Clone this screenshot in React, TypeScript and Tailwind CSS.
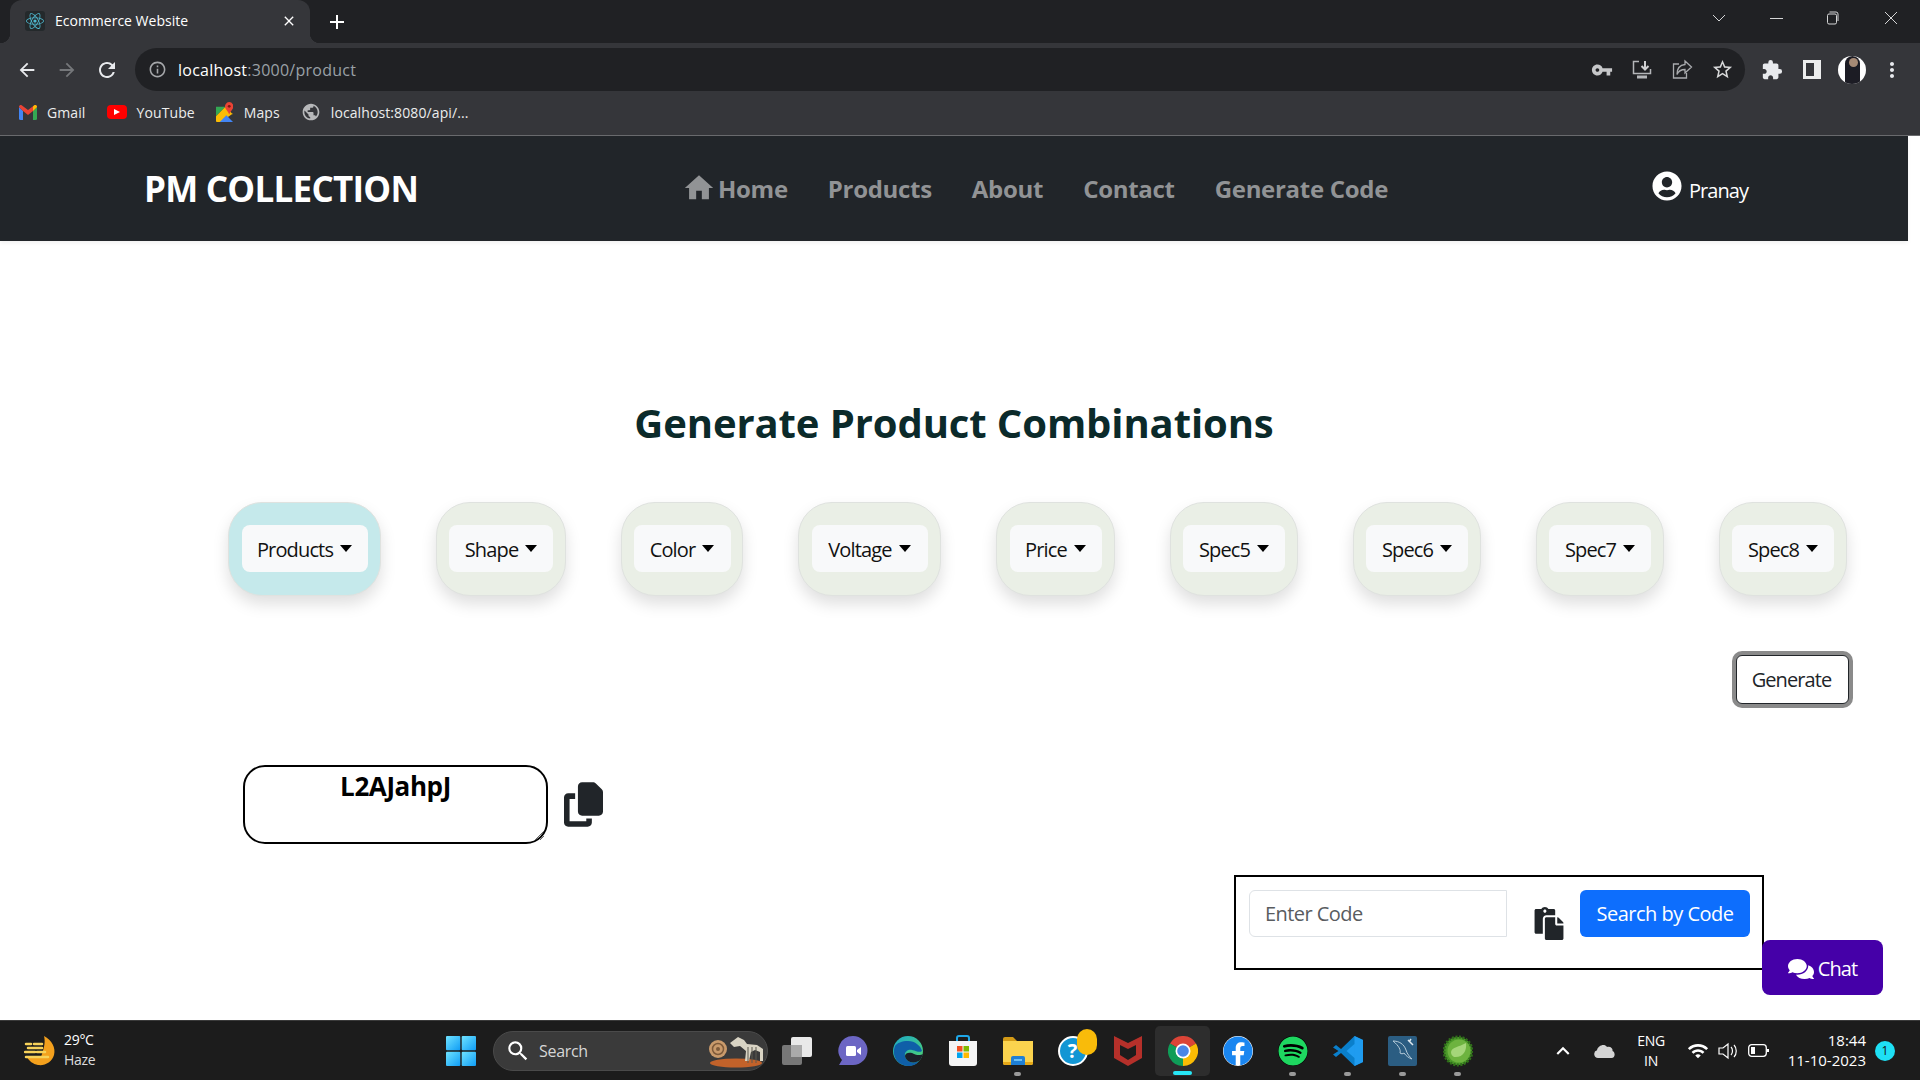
import React from "react";
import { FaReact, FaUserCircle, FaPaste, FaComments, FaFacebook, FaSpotify } from "react-icons/fa";
import { FaCopy } from "react-icons/fa6";
import { MdArrowBack, MdArrowForward, MdRefresh, MdInfoOutline, MdVpnKey, MdStarBorder, MdMoreVert, MdPublic, MdSearch, MdKeyboardArrowUp, MdClose, MdAdd, MdWifi, MdExtension, MdHome } from "react-icons/md";

const cards = [
  { label: "Products", card: "w-[153px] bg-[#c5e9eb]", btn: "w-[126px]" },
  { label: "Shape", card: "w-[130px] bg-[#eaefe6]", btn: "w-[104px]" },
  { label: "Color", card: "w-[122px] bg-[#eaefe6]", btn: "w-[97px]" },
  { label: "Voltage", card: "w-[143px] bg-[#eaefe6]", btn: "w-[116px]" },
  { label: "Price", card: "w-[119px] bg-[#eaefe6]", btn: "w-[92px]" },
  { label: "Spec5", card: "w-[128px] bg-[#eaefe6]", btn: "w-[102px]" },
  { label: "Spec6", card: "w-[128px] bg-[#eaefe6]", btn: "w-[102px]" },
  { label: "Spec7", card: "w-[128px] bg-[#eaefe6]", btn: "w-[102px]" },
  { label: "Spec8", card: "w-[128px] bg-[#eaefe6]", btn: "w-[102px]" },
];

const GmailIcon = () => (
  <svg width="18" height="15" viewBox="0 0 18 15">
    <path d="M0 2v11.500A1.500 1.500 0 0 0 1.500 15H4V6z" fill="#4285f4" />
    <path d="M18 2v11.500a1.500 1.500 0 0 1-1.500 1.500H14V6z" fill="#34a853" />
    <path d="M0 2l4 4 5 4 5-4 4-4c0-2-2-2.600-3-1.500L9 5 3 .5C2-.6 0 0 0 2z" fill="#ea4335" />
    <path d="M14 1.500V6l4-4c0-2-2-2.600-3-1.500z" fill="#fbbc04" />
  </svg>
);

const MapsIcon = () => (
  <svg width="17" height="21" viewBox="0 0 18 22">
    <path d="M0 5h10L0 15z" fill="#34a853" />
    <path d="M0 15L10 5l8 8v-1L5 21H1a1 1 0 0 1-1-1z" fill="#fbbc04" />
    <path d="M4 21l7-7 7 7z" fill="#4285f4" />
    <path d="M14 0a4.500 4.500 0 0 1 4 6.500c-.8 2-3 3.500-4 6.500-1-3-3.200-4.500-4-6.500A4.500 4.500 0 0 1 14 0z" fill="#ea4335" />
    <circle cx="14" cy="4.500" r="1.500" fill="#7c1a12" />
  </svg>
);

const InstallIcon = () => (
  <svg width="22" height="22" viewBox="0 0 22 22" fill="none" stroke="#b4b6b9" strokeWidth="1.500">
    <path d="M8 2.500H2.500v12h17V10" />
    <path d="M14 2v8M10.500 7l3.500 3.500L17.500 7" strokeWidth="2" stroke="#d0d1d3" />
    <path d="M6 18h10" strokeWidth="3" />
  </svg>
);

const ShareIcon = () => (
  <svg width="22" height="22" viewBox="0 0 22 22" fill="none" stroke="#a9abae" strokeWidth="1.300">
    <path d="M8 5H2.500v14h13v-5" />
    <path d="M14 2l6.500 6-6.500 6v-3.500c-4 0-6.500 1.500-8 5 0-6 3-9.500 8-10z" />
  </svg>
);

const WindowsLogo = () => (
  <svg width="30" height="30" viewBox="0 0 30 30">
    <defs>
      <linearGradient id="win" x1="0" y1="0" x2="1" y2="1">
        <stop offset="0" stopColor="#6fe3ff" />
        <stop offset="1" stopColor="#0f9cf5" />
      </linearGradient>
    </defs>
    <rect x="0" y="0" width="14.300" height="14.300" rx="1" fill="url(#win)" />
    <rect x="15.700" y="0" width="14.300" height="14.300" rx="1" fill="url(#win)" />
    <rect x="0" y="15.700" width="14.300" height="14.300" rx="1" fill="url(#win)" />
    <rect x="15.700" y="15.700" width="14.300" height="14.300" rx="1" fill="url(#win)" />
  </svg>
);

const WeatherIcon = () => (
  <svg width="32" height="30" viewBox="0 0 32 30">
    <path d="M20 0c8 4 12 12 10 19-2 7-9 11-16 10C9 28 5 25 3 21h14c2-6 5-14 3-21z" fill="#f3a01d" />
    <path d="M2 8h5M10 8h8M4 12h14M1 16h10M13 16h8M2 21h22" stroke="#f7d25a" strokeWidth="2.500" strokeLinecap="round" />
  </svg>
);

const SearchArt = () => (
  <svg width="56" height="34" viewBox="0 0 56 34">
    <ellipse cx="28" cy="29" rx="26" ry="4.500" fill="#c2622a" />
    <circle cx="10" cy="15" r="9" fill="#c99a6b" />
    <circle cx="10" cy="15" r="5.500" fill="none" stroke="#7e5a3a" strokeWidth="1.500" />
    <circle cx="10" cy="15" r="2" fill="#7e5a3a" />
    <path d="M22 9l8-6 6 3 3 4 10 1 6 4v12h-3v-9l-5-2-4 2-2 9h-4l1-10-6-5-6 1z" fill="#d9d4c4" />
    <path d="M40 13v16M44 13v16M48 13v16" stroke="#5c5a50" strokeWidth="1" />
  </svg>
);

const TaskView = () => (
  <svg width="32" height="30" viewBox="0 0 32 30">
    <rect x="0" y="9" width="20" height="20" rx="2" fill="#777" />
    <rect x="9" y="1" width="21" height="20" rx="2" fill="#e9e9e9" />
    <rect x="9" y="9" width="11" height="12" fill="#aaa" />
  </svg>
);

const MeetIcon = () => (
  <svg width="30" height="30" viewBox="0 0 30 30">
    <path d="M15 0a14.500 14.500 0 0 1 0 29H1l3-5A14.500 14.500 0 0 1 15 0z" fill="#6c66c4" />
    <rect x="8" y="10" width="10" height="10" rx="1.500" fill="#fff" />
    <path d="M19 14l4-3v8l-4-3z" fill="#fff" />
  </svg>
);

const EdgeIcon = () => (
  <svg width="30" height="30" viewBox="0 0 30 30">
    <defs>
      <linearGradient id="edge" x1="0" y1="0" x2="1" y2="1">
        <stop offset="0" stopColor="#1ba8c9" />
        <stop offset="1" stopColor="#52d66c" />
      </linearGradient>
    </defs>
    <circle cx="15" cy="15" r="15" fill="url(#edge)" />
    <path d="M2 10c-4 10 3 20 13 20 5 0 9-2 11-5-6 3-13 1-14-5-1-4 3-7 7-6 5 1 7 3 10 1C28 10 22 5 15 5 9 5 4 7 2 10z" fill="#0f5fa8" />
    <path d="M12 20c1 6 8 8 14 5 2-2 3-4 4-7-3 2-8 1-11-1-3-1-7 0-7 3z" fill="#1a1f2a" />
  </svg>
);

const StoreIcon = () => (
  <svg width="30" height="32" viewBox="0 0 30 32">
    <path d="M9 7V3a2 2 0 0 1 2-2h8a2 2 0 0 1 2 2v4" fill="none" stroke="#1ea7e8" strokeWidth="2" />
    <path d="M1 6h28v22a3 3 0 0 1-3 3H4a3 3 0 0 1-3-3z" fill="#f4f4f4" />
    <rect x="9" y="11" width="5.500" height="5.500" fill="#f25022" />
    <rect x="15.500" y="11" width="5.500" height="5.500" fill="#7fba00" />
    <rect x="9" y="17.500" width="5.500" height="5.500" fill="#00a4ef" />
    <rect x="15.500" y="17.500" width="5.500" height="5.500" fill="#ffb900" />
  </svg>
);

const FolderIcon = () => (
  <svg width="30" height="28" viewBox="0 0 30 28">
    <path d="M0 2a2 2 0 0 1 2-2h8l4 4h-14z" fill="#d39a16" />
    <path d="M0 4h30v22a2 2 0 0 1-2 2H2a2 2 0 0 1-2-2z" fill="#fbd34e" />
    <path d="M0 25h30v1a2 2 0 0 1-2 2H2a2 2 0 0 1-2-2z" fill="#e6a817" />
    <path d="M8 21a2 2 0 0 1 2-2h10a2 2 0 0 1 2 2v7H8z" fill="#1f7fd4" />
    <rect x="11" y="22" width="8" height="2" fill="#6cc0f5" />
  </svg>
);

const McAfeeIcon = () => (
  <svg width="28" height="30" viewBox="0 0 28 30">
    <path d="M0 0l14 7 14-7v22l-14 8-14-8zM6 9v10l8 5 8-5V9l-8 4z" fill="#b5302a" fillRule="evenodd" />
  </svg>
);

const ChromeIcon = () => (
  <svg width="30" height="30" viewBox="0 0 30 30">
    <path d="M15 15L2 7.500A15 15 0 0 1 28 7.500z" fill="#db4437" />
    <path d="M15 15L28 7.500A15 15 0 0 1 15 30z" fill="#fbbc04" />
    <path d="M15 15L15 30A15 15 0 0 1 2 7.500z" fill="#0f9d58" />
    <circle cx="15" cy="15" r="7.500" fill="#fff" />
    <circle cx="15" cy="15" r="5.800" fill="#4a86e8" />
  </svg>
);

const VsCodeIcon = () => (
  <svg width="30" height="30" viewBox="0 0 30 30">
    <path d="M21.500 0L30 4v22l-8.500 4L8 17l-5 4-3-2.500L5.500 15 0 11.500 3 9l5 4z" fill="#0a7fcb" />
    <path d="M21.500 0L30 4v22l-8.500 4zM21.500 8l-8 7 8 7z" fill="#1f9cf0" fillRule="evenodd" />
  </svg>
);

const MysqlIcon = () => (
  <svg width="29" height="30" viewBox="0 0 29 30">
    <rect width="29" height="30" rx="2" fill="#2b5d82" />
    <path d="M5 5c6 0 11 3 13 9 1 4 4 7 6 9-3-1-6-3-8-6-1 1-3 1-4 0 1-3-1-7-7-12z" fill="none" stroke="#b5cbd9" strokeWidth="1" />
    <path d="M20 4l5 5M23 3l-2 3" stroke="#dfe8ee" strokeWidth="1.500" />
  </svg>
);

const SpringIcon = () => (
  <svg width="30" height="32" viewBox="0 0 30 32">
    <circle cx="15" cy="16" r="14" fill="#4c9a2a" stroke="#2f6e1a" strokeWidth="3" strokeDasharray="2 1.500" />
    <circle cx="16" cy="16" r="11.500" fill="#6db33f" />
    <path d="M23 8c1 8-3 15-12 14-2-1-3-3-3-5 1-5 8-5 15-9z" fill="#a5d67a" />
  </svg>
);

const HelpIcon = () => (
  <div className="relative w-[30px] h-[30px] rounded-full border-2 border-white bg-[#1296d4] flex items-center justify-center text-white text-[20px] font-bold">
    ?
    <span className="absolute top-[-9px] right-[-11px] w-[20px] h-[26px] rounded-full bg-[#f9bb0a]" />
  </div>
);

const taskbarApps = [
  { id: "task", icon: <TaskView /> },
  { id: "meet", icon: <MeetIcon /> },
  { id: "edge", icon: <EdgeIcon /> },
  { id: "store", icon: <StoreIcon /> },
  { id: "folder", icon: <FolderIcon />, dot: true },
  { id: "help", icon: <HelpIcon /> },
  { id: "mcafee", icon: <McAfeeIcon /> },
  { id: "chrome", icon: <ChromeIcon />, active: true },
  { id: "fb", icon: <FaFacebook className="w-[30px] h-[30px] text-[#1a86f0] bg-white rounded-full" /> },
  { id: "spotify", icon: <FaSpotify className="w-[30px] h-[30px] text-[#1ed760] bg-black rounded-full" />, dot: true },
  { id: "vscode", icon: <VsCodeIcon />, dot: true },
  { id: "mysql", icon: <MysqlIcon />, dot: true },
  { id: "spring", icon: <SpringIcon />, dot: true },
];

const ToolbarCell = ({ children }: { children: React.ReactNode }) => (
  <div className="w-10 h-10 flex items-center justify-center shrink-0">{children}</div>
);

const BrowserChrome = () => (
  <div className="h-[136px] bg-[#35363a] border-b border-[#6a6b6e] shrink-0">
    {/* Tab strip */}
    <div className="h-[43px] bg-[#202124] flex pl-[10px]">
      <div className="relative w-[300px] h-[43px] bg-[#35363a] rounded-t-[12px] flex items-center pl-[15px] pr-[13px] pb-[2px] text-white text-[14px]">
        <span className="absolute left-[-10px] bottom-0 w-[10px] h-[10px] bg-[radial-gradient(circle_at_0_0,#202124_10px,#35363a_10.5px)]" />
        <span className="absolute right-[-10px] bottom-0 w-[10px] h-[10px] bg-[radial-gradient(circle_at_100%_0,#202124_10px,#35363a_10.5px)]" />
        <span className="w-5 h-5 bg-[#24292b] rounded-[3px] flex items-center justify-center mr-[10px]">
          <FaReact className="w-[18px] h-[18px] text-[#4fb8cf]" />
        </span>
        <span>Ecommerce Website</span>
        <MdClose className="ml-auto w-[16px] h-[16px] text-white" />
      </div>
      <div className="ml-[15px] w-6 h-[43px] flex items-center justify-center">
        <MdAdd className="w-[24px] h-[24px] text-white" />
      </div>
      <div className="ml-auto flex items-center text-[#d5d6d7] h-[36px]">
        <svg width="14" height="8" viewBox="0 0 14 8" fill="none" stroke="currentColor"><path d="M1 1l6 6 6-6" /></svg>
        <div className="ml-[44px] w-[13px] border-t border-current" />
        <svg className="ml-[43px]" width="13" height="14" viewBox="0 0 13 14" fill="none" stroke="currentColor"><rect x="1.500" y="3" width="9" height="10" rx="1.500" /><path d="M3.500 1H10a2 2 0 0 1 2 2v7" /></svg>
        <svg className="ml-[45px] mr-[22px]" width="14" height="14" viewBox="0 0 14 14" fill="none" stroke="currentColor"><path d="M1 1l12 12M13 1L1 13" /></svg>
      </div>
    </div>
    {/* Toolbar */}
    <div className="h-[48px] flex items-center pl-[7px] pt-[5px]">
      <ToolbarCell><MdArrowBack className="w-[22px] h-[22px] text-[#e8eaed]" /></ToolbarCell>
      <ToolbarCell><MdArrowForward className="w-[22px] h-[22px] text-[#75777a]" /></ToolbarCell>
      <ToolbarCell><MdRefresh className="w-[24px] h-[24px] text-[#e8eaed]" /></ToolbarCell>
      <div className="ml-[8px] w-[1610px] h-[43px] bg-[#202124] rounded-full flex items-center pl-[13px] pr-[3px]">
        <MdInfoOutline className="w-[19px] h-[19px] text-[#a5a7aa]" />
        <span className="ml-[11px] text-[16px] tracking-[0.25px] text-white">localhost<span className="text-[#9aa0a6]">:3000/product</span></span>
        <div className="ml-auto flex">
          <ToolbarCell><MdVpnKey className="w-[22px] h-[22px] text-[#c6c7c9]" /></ToolbarCell>
          <ToolbarCell><InstallIcon /></ToolbarCell>
          <ToolbarCell><ShareIcon /></ToolbarCell>
          <ToolbarCell><MdStarBorder className="w-[23px] h-[23px] text-[#d8d9da]" /></ToolbarCell>
        </div>
      </div>
      <div className="ml-[7px] flex">
        <ToolbarCell><MdExtension className="w-[22px] h-[22px] text-[#e8eaed]" /></ToolbarCell>
        <ToolbarCell><span className="w-[18px] h-[19px] border-[3px] border-r-[7px] border-[#eceded] bg-[#35363a]" /></ToolbarCell>
        <ToolbarCell>
          <span className="relative w-[28px] h-[28px] rounded-full bg-white flex justify-center overflow-hidden">
            <span className="w-[15px] h-[28px] bg-[#1c1c24] rounded-t-[8px]" />
            <span className="absolute top-[2px] left-[11px] w-[9px] h-[9px] rounded-full bg-[#a68a75]" />
          </span>
        </ToolbarCell>
        <ToolbarCell><MdMoreVert className="w-[24px] h-[24px] text-[#e8eaed]" /></ToolbarCell>
      </div>
    </div>
    {/* Bookmarks */}
    <div className="h-[44px] flex items-center pl-[19px] pb-[2px] text-[14px] tracking-[0.1px] text-[#eceded]">
      <GmailIcon />
      <span className="ml-[10px]">Gmail</span>
      <span className="ml-[21px] w-5 h-[14px] rounded-[4px] bg-[#f00] flex items-center justify-center">
        <span className="border-l-[6px] border-y-[3.500px] border-y-transparent border-l-white" />
      </span>
      <span className="ml-[10px]">YouTube</span>
      <span className="ml-[21px] flex"><MapsIcon /></span>
      <span className="ml-[11px]">Maps</span>
      <MdPublic className="ml-[21px] w-[20px] h-[20px] text-[#b7b8ba]" />
      <span className="ml-[10px]">localhost:8080/api/...</span>
    </div>
  </div>
);

const Navbar = () => (
  <nav className="w-[1908px] h-[105px] bg-[#212529] flex items-center pl-[144px] pr-[160px] shadow-[0_2px_4px_rgba(0,0,0,0.06)] shrink-0">
    <a className="w-[540px] pt-[2px] text-[35px] font-bold text-white tracking-[-0.75px]">PM COLLECTION</a>
    <div className="flex items-center gap-[40px] pt-[1px] text-[24px] font-bold text-[#919395] tracking-[-0.3px]">
      <a className="flex items-center gap-[4px]"><MdHome className="w-[34px] h-[34px] mb-[3px] -mx-[2px]" />Home</a>
      <a>Products</a>
      <a>About</a>
      <a>Contact</a>
      <a>Generate Code</a>
    </div>
    <div className="ml-auto flex items-center gap-[7px] text-[20px] text-white tracking-[-0.95px]">
      <FaUserCircle className="w-[30px] h-[30px] mb-[5px]" />
      <span className="mt-[5px]">Pranay</span>
    </div>
  </nav>
);

const Taskbar = () => (
  <div className="h-[60px] bg-[#1c1c1c] border-t border-[#3a3a3a] flex items-center text-white shrink-0">
    <div className="w-[446px] flex items-center pl-[24px] shrink-0">
      <WeatherIcon />
      <div className="ml-[8px] mb-[2px] text-[14px] leading-[20px] tracking-[-0.3px]">
        <div>29°C</div>
        <div className="text-[#dcdcdc]">Haze</div>
      </div>
    </div>
    <WindowsLogo />
    <div className="ml-[17px] w-[275px] h-[40px] rounded-full bg-[#3a3a3a] border border-[#4a4a4a] flex items-center pl-[11px] pr-[3px] text-[16px] text-[#d6d6d6] tracking-[-0.3px]">
      <MdSearch className="w-[26px] h-[26px] text-white" />
      <span className="ml-[8px]">Search</span>
      <span className="ml-auto flex"><SearchArt /></span>
    </div>
    <div className="flex ml-[2px]">
      {taskbarApps.map((app) => (
        <div
          key={app.id}
          className={app.active
            ? "relative w-[55px] h-[50px] flex items-center justify-center bg-[#2d2d2d] rounded-[5px]"
            : "relative w-[55px] h-[50px] flex items-center justify-center"}
        >
          {app.icon}
          {app.dot && <span className="absolute bottom-[0px] left-[24px] w-[7px] h-[4px] rounded-full bg-[#9a9a9a]" />}
          {app.active && <span className="absolute bottom-[1px] left-[18px] w-[19px] h-[4px] rounded-full bg-[#27e6f5]" />}
        </div>
      ))}
    </div>
    <div className="ml-auto flex items-center pr-[25px] text-[14px]">
      <div className="w-[36px] flex justify-center"><MdKeyboardArrowUp className="w-[26px] h-[26px]" /></div>
      <div className="w-[42px] pl-[4px] flex justify-center">
        <svg width="21" height="14" viewBox="0 0 21 14"><path d="M4 14a4 4 0 0 1-1-7.800C4 2 10-1 13 3c4-1 6 2 5.500 4 3 1 3 7-1 7z" fill="#d4d4d4" /></svg>
      </div>
      <div className="w-[56px] text-center leading-[20px] tracking-[-0.3px]">ENG<br />IN</div>
      <div className="w-[34px] pl-[4px] flex justify-center"><MdWifi className="w-[22px] h-[22px]" /></div>
      <div className="w-[30px] flex justify-center">
        <svg width="21" height="18" viewBox="0 0 21 18" fill="none" stroke="#fff" strokeWidth="1.200"><path d="M1 6h4l5-4v14l-5-4H1zM13 5c2 2 2 6 0 8M16 3c3 3 3 9 0 12" /></svg>
      </div>
      <div className="w-[30px] flex justify-center">
        <svg width="21" height="13" viewBox="0 0 21 13" fill="none"><rect x=".700" y=".700" width="17.600" height="11.600" rx="3" stroke="#fff" strokeWidth="1.300" /><rect x="3" y="3" width="4" height="7" fill="#fff" /><rect x="19" y="5" width="2" height="3" fill="#fff" /></svg>
      </div>
      <div className="w-[93px] text-right leading-[20px] text-[15px] mb-[1px]">18:44<br />11-10-2023</div>
      <div className="ml-[9px] w-5 h-5 rounded-full bg-[#1ee0f5] text-[#111] text-[12px] flex items-center justify-center">1</div>
    </div>
  </div>
);

const App: React.FC = () => {
  return (
    <div className="w-[1920px] h-[1080px] overflow-hidden flex flex-col bg-white [font-family:'Open_Sans',sans-serif]">
      <BrowserChrome />
      <Navbar />

      {/* Page body */}
      <main className="relative flex-1 pt-[158px] text-[#212529]">
        <h1 className="text-[40px] leading-[48px] font-bold text-center mr-[12px] text-[#0b2a2a] tracking-[-0.1px]">
          Generate Product Combinations
        </h1>

        <div className="mt-[55px] flex gap-[55px] pl-[228px]">
          {cards.map((c) => (
            <div
              key={c.label}
              className={`${c.card} h-[94px] rounded-[34px] border border-[#dfe2df] shadow-[0_8px_16px_rgba(0,0,0,0.13)] flex justify-center pt-[22px] shrink-0`}
            >
              <button className={`${c.btn} h-[47px] pt-[2px] rounded-[8px] bg-[#f8f9fa] flex items-center justify-center text-[20px] text-[#111] tracking-[-0.85px]`}>
                {c.label}
                <span className="ml-[7px] mb-[3px] border-t-[7px] border-x-[6px] border-x-transparent border-t-black" />
              </button>
            </div>
          ))}
        </div>

        <div className="mt-[59px] flex justify-end pr-[71px]">
          <button className="w-[113px] h-[49px] rounded-[6px] border border-[#212529] bg-white pr-[2px] text-[20px] tracking-[-0.9px] text-[#212529] shadow-[0_0_0_4px_#8a8a8a]">
            Generate
          </button>
        </div>

        <div className="mt-[61px] flex pl-[243px]">
          <div className="relative w-[305px] h-[79px]">
            <textarea
              readOnly
              value="L2AJahpJ"
              className="block resize-none w-full h-full rounded-[22px] border-2 border-black text-center text-[26px] leading-[38px] font-bold text-black tracking-[-0.4px] px-[2px] py-0 outline-none"
            />
            <svg className="absolute right-[3px] bottom-[3px]" width="11" height="11" viewBox="0 0 11 11" stroke="#666" strokeWidth="1">
              <path d="M1 10L10 1M6 10l4-4" />
            </svg>
          </div>
          <FaCopy className="ml-[16px] mt-[17px] w-[39px] h-[45px] text-[#212529]" />
        </div>

        <div className="mt-[31px] flex justify-end pr-[156px]">
          <div className="w-[530px] h-[95px] border-2 border-black flex pl-[13px] pt-[13px]">
            <div className="w-[258px] h-[47px] rounded-l-[6px] border border-[#dee2e6] bg-white flex items-center pl-[15px] text-[20px] text-[#595c5f] tracking-[-0.55px]">
              Enter Code
            </div>
            <FaPaste className="ml-[25px] mt-[17px] w-[34px] h-[33px] text-[#212529]" />
            <button className="ml-[14px] w-[170px] h-[47px] rounded-[6px] bg-[#0d6efd] text-white text-[20px] tracking-[-0.5px]">
              Search by Code
            </button>
          </div>
        </div>

        <button className="absolute left-[1762px] top-[699px] w-[121px] h-[55px] pt-[2px] rounded-[8px] bg-[#4500a8] text-white text-[20px] tracking-[-0.9px] flex items-center justify-center gap-[4px]">
          <FaComments className="w-[26px] h-[24px]" />
          Chat
        </button>
      </main>

      <Taskbar />
    </div>
  );
};

export default App;
